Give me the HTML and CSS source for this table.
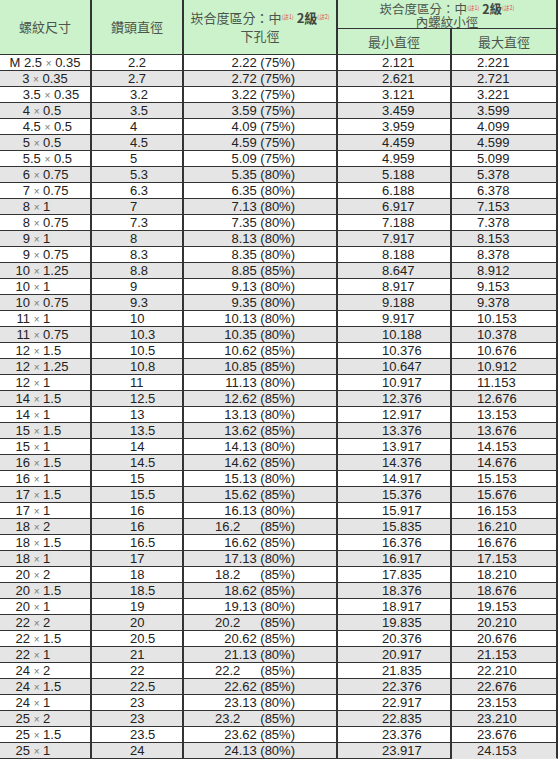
FILE: index.html
```html
<!DOCTYPE html>
<html lang="zh-Hant">
<head>
<meta charset="utf-8">
<title>螺紋尺寸表</title>
<link rel="stylesheet" href="styles.css">
</head>
<body>
<div class="sheet">
  <div class="head">
    <div class="hc hspan">螺紋尺寸</div>
    <div class="hc hspan">鑽頭直徑</div>
    <div class="hc hspan hcol3">
      <div>崁合度區分：中<sup>(註1)</sup> <b>2級</b><sup>(註2)</sup></div>
      <div>下孔徑</div>
    </div>
    <div class="hc hgroup">
      <div>崁合度區分：中<sup>(註1)</sup> <b>2級</b><sup>(註2)</sup></div>
      <div>內螺紋小徑</div>
    </div>
    <div class="hc">最小直徑</div>
    <div class="hc">最大直徑</div>
  </div>
  <div class="body">
    <div class="row"><div class="c c1 ctr">M 2.5 <span class="x">×</span> 0.35</div><div class="c c2 ctr">2.2</div><div class="c c3">2.22 (75%)</div><div class="c c4">2.121</div><div class="c c5">2.221</div></div>
    <div class="row"><div class="c c1 ctr">3 <span class="x">×</span> 0.35</div><div class="c c2 ctr">2.7</div><div class="c c3">2.72 (75%)</div><div class="c c4">2.621</div><div class="c c5">2.721</div></div>
    <div class="row"><div class="c c1"><span class="ip">3</span>.5 <span class="x">×</span> 0.35</div><div class="c c2">3.2</div><div class="c c3">3.22 (75%)</div><div class="c c4">3.121</div><div class="c c5">3.221</div></div>
    <div class="row"><div class="c c1"><span class="ip">4</span> <span class="x">×</span> 0.5</div><div class="c c2">3.5</div><div class="c c3">3.59 (75%)</div><div class="c c4">3.459</div><div class="c c5">3.599</div></div>
    <div class="row"><div class="c c1"><span class="ip">4</span>.5 <span class="x">×</span> 0.5</div><div class="c c2">4</div><div class="c c3">4.09 (75%)</div><div class="c c4">3.959</div><div class="c c5">4.099</div></div>
    <div class="row"><div class="c c1"><span class="ip">5</span> <span class="x">×</span> 0.5</div><div class="c c2">4.5</div><div class="c c3">4.59 (75%)</div><div class="c c4">4.459</div><div class="c c5">4.599</div></div>
    <div class="row"><div class="c c1"><span class="ip">5</span>.5 <span class="x">×</span> 0.5</div><div class="c c2">5</div><div class="c c3">5.09 (75%)</div><div class="c c4">4.959</div><div class="c c5">5.099</div></div>
    <div class="row"><div class="c c1"><span class="ip">6</span> <span class="x">×</span> 0.75</div><div class="c c2">5.3</div><div class="c c3">5.35 (80%)</div><div class="c c4">5.188</div><div class="c c5">5.378</div></div>
    <div class="row"><div class="c c1"><span class="ip">7</span> <span class="x">×</span> 0.75</div><div class="c c2">6.3</div><div class="c c3">6.35 (80%)</div><div class="c c4">6.188</div><div class="c c5">6.378</div></div>
    <div class="row"><div class="c c1"><span class="ip">8</span> <span class="x">×</span> 1</div><div class="c c2">7</div><div class="c c3">7.13 (80%)</div><div class="c c4">6.917</div><div class="c c5">7.153</div></div>
    <div class="row"><div class="c c1"><span class="ip">8</span> <span class="x">×</span> 0.75</div><div class="c c2">7.3</div><div class="c c3">7.35 (80%)</div><div class="c c4">7.188</div><div class="c c5">7.378</div></div>
    <div class="row"><div class="c c1"><span class="ip">9</span> <span class="x">×</span> 1</div><div class="c c2">8</div><div class="c c3">8.13 (80%)</div><div class="c c4">7.917</div><div class="c c5">8.153</div></div>
    <div class="row"><div class="c c1"><span class="ip">9</span> <span class="x">×</span> 0.75</div><div class="c c2">8.3</div><div class="c c3">8.35 (80%)</div><div class="c c4">8.188</div><div class="c c5">8.378</div></div>
    <div class="row"><div class="c c1"><span class="ip">10</span> <span class="x">×</span> 1.25</div><div class="c c2">8.8</div><div class="c c3">8.85 (85%)</div><div class="c c4">8.647</div><div class="c c5">8.912</div></div>
    <div class="row"><div class="c c1"><span class="ip">10</span> <span class="x">×</span> 1</div><div class="c c2">9</div><div class="c c3">9.13 (80%)</div><div class="c c4">8.917</div><div class="c c5">9.153</div></div>
    <div class="row"><div class="c c1"><span class="ip">10</span> <span class="x">×</span> 0.75</div><div class="c c2">9.3</div><div class="c c3">9.35 (80%)</div><div class="c c4">9.188</div><div class="c c5">9.378</div></div>
    <div class="row"><div class="c c1"><span class="ip">11</span> <span class="x">×</span> 1</div><div class="c c2">10</div><div class="c c3">10.13 (80%)</div><div class="c c4">9.917</div><div class="c c5">10.153</div></div>
    <div class="row"><div class="c c1"><span class="ip">11</span> <span class="x">×</span> 0.75</div><div class="c c2">10.3</div><div class="c c3">10.35 (80%)</div><div class="c c4">10.188</div><div class="c c5">10.378</div></div>
    <div class="row"><div class="c c1"><span class="ip">12</span> <span class="x">×</span> 1.5</div><div class="c c2">10.5</div><div class="c c3">10.62 (85%)</div><div class="c c4">10.376</div><div class="c c5">10.676</div></div>
    <div class="row"><div class="c c1"><span class="ip">12</span> <span class="x">×</span> 1.25</div><div class="c c2">10.8</div><div class="c c3">10.85 (85%)</div><div class="c c4">10.647</div><div class="c c5">10.912</div></div>
    <div class="row"><div class="c c1"><span class="ip">12</span> <span class="x">×</span> 1</div><div class="c c2">11</div><div class="c c3">11.13 (80%)</div><div class="c c4">10.917</div><div class="c c5">11.153</div></div>
    <div class="row"><div class="c c1"><span class="ip">14</span> <span class="x">×</span> 1.5</div><div class="c c2">12.5</div><div class="c c3">12.62 (85%)</div><div class="c c4">12.376</div><div class="c c5">12.676</div></div>
    <div class="row"><div class="c c1"><span class="ip">14</span> <span class="x">×</span> 1</div><div class="c c2">13</div><div class="c c3">13.13 (80%)</div><div class="c c4">12.917</div><div class="c c5">13.153</div></div>
    <div class="row"><div class="c c1"><span class="ip">15</span> <span class="x">×</span> 1.5</div><div class="c c2">13.5</div><div class="c c3">13.62 (85%)</div><div class="c c4">13.376</div><div class="c c5">13.676</div></div>
    <div class="row"><div class="c c1"><span class="ip">15</span> <span class="x">×</span> 1</div><div class="c c2">14</div><div class="c c3">14.13 (80%)</div><div class="c c4">13.917</div><div class="c c5">14.153</div></div>
    <div class="row"><div class="c c1"><span class="ip">16</span> <span class="x">×</span> 1.5</div><div class="c c2">14.5</div><div class="c c3">14.62 (85%)</div><div class="c c4">14.376</div><div class="c c5">14.676</div></div>
    <div class="row"><div class="c c1"><span class="ip">16</span> <span class="x">×</span> 1</div><div class="c c2">15</div><div class="c c3">15.13 (80%)</div><div class="c c4">14.917</div><div class="c c5">15.153</div></div>
    <div class="row"><div class="c c1"><span class="ip">17</span> <span class="x">×</span> 1.5</div><div class="c c2">15.5</div><div class="c c3">15.62 (85%)</div><div class="c c4">15.376</div><div class="c c5">15.676</div></div>
    <div class="row"><div class="c c1"><span class="ip">17</span> <span class="x">×</span> 1</div><div class="c c2">16</div><div class="c c3">16.13 (80%)</div><div class="c c4">15.917</div><div class="c c5">16.153</div></div>
    <div class="row"><div class="c c1"><span class="ip">18</span> <span class="x">×</span> 2</div><div class="c c2">16</div><div class="c c3">16.2<span class="gap"></span>(85%)</div><div class="c c4">15.835</div><div class="c c5">16.210</div></div>
    <div class="row"><div class="c c1"><span class="ip">18</span> <span class="x">×</span> 1.5</div><div class="c c2">16.5</div><div class="c c3">16.62 (85%)</div><div class="c c4">16.376</div><div class="c c5">16.676</div></div>
    <div class="row"><div class="c c1"><span class="ip">18</span> <span class="x">×</span> 1</div><div class="c c2">17</div><div class="c c3">17.13 (80%)</div><div class="c c4">16.917</div><div class="c c5">17.153</div></div>
    <div class="row"><div class="c c1"><span class="ip">20</span> <span class="x">×</span> 2</div><div class="c c2">18</div><div class="c c3">18.2<span class="gap"></span>(85%)</div><div class="c c4">17.835</div><div class="c c5">18.210</div></div>
    <div class="row"><div class="c c1"><span class="ip">20</span> <span class="x">×</span> 1.5</div><div class="c c2">18.5</div><div class="c c3">18.62 (85%)</div><div class="c c4">18.376</div><div class="c c5">18.676</div></div>
    <div class="row"><div class="c c1"><span class="ip">20</span> <span class="x">×</span> 1</div><div class="c c2">19</div><div class="c c3">19.13 (80%)</div><div class="c c4">18.917</div><div class="c c5">19.153</div></div>
    <div class="row"><div class="c c1"><span class="ip">22</span> <span class="x">×</span> 2</div><div class="c c2">20</div><div class="c c3">20.2<span class="gap"></span>(85%)</div><div class="c c4">19.835</div><div class="c c5">20.210</div></div>
    <div class="row"><div class="c c1"><span class="ip">22</span> <span class="x">×</span> 1.5</div><div class="c c2">20.5</div><div class="c c3">20.62 (85%)</div><div class="c c4">20.376</div><div class="c c5">20.676</div></div>
    <div class="row"><div class="c c1"><span class="ip">22</span> <span class="x">×</span> 1</div><div class="c c2">21</div><div class="c c3">21.13 (80%)</div><div class="c c4">20.917</div><div class="c c5">21.153</div></div>
    <div class="row"><div class="c c1"><span class="ip">24</span> <span class="x">×</span> 2</div><div class="c c2">22</div><div class="c c3">22.2<span class="gap"></span>(85%)</div><div class="c c4">21.835</div><div class="c c5">22.210</div></div>
    <div class="row"><div class="c c1"><span class="ip">24</span> <span class="x">×</span> 1.5</div><div class="c c2">22.5</div><div class="c c3">22.62 (85%)</div><div class="c c4">22.376</div><div class="c c5">22.676</div></div>
    <div class="row"><div class="c c1"><span class="ip">24</span> <span class="x">×</span> 1</div><div class="c c2">23</div><div class="c c3">23.13 (80%)</div><div class="c c4">22.917</div><div class="c c5">23.153</div></div>
    <div class="row"><div class="c c1"><span class="ip">25</span> <span class="x">×</span> 2</div><div class="c c2">23</div><div class="c c3">23.2<span class="gap"></span>(85%)</div><div class="c c4">22.835</div><div class="c c5">23.210</div></div>
    <div class="row"><div class="c c1"><span class="ip">25</span> <span class="x">×</span> 1.5</div><div class="c c2">23.5</div><div class="c c3">23.62 (85%)</div><div class="c c4">23.376</div><div class="c c5">23.676</div></div>
    <div class="row last"><div class="c c1"><span class="ip">25</span> <span class="x">×</span> 1</div><div class="c c2">24</div><div class="c c3">24.13 (80%)</div><div class="c c4">23.917</div><div class="c c5">24.153</div></div>
  </div>
</div>
</body>
</html>
```

FILE: styles.css
```css
html, body {
  margin: 0;
  padding: 0;
  background: #ffffff;
}

body {
  font-family: "Liberation Sans", Arial, sans-serif;
  font-size: 13px;
  color: #222222;
}

.sheet {
  width: 558px;
}

.head {
  display: grid;
  grid-template-columns: 92px 92px 154px 114px 106px;
  grid-template-rows: 29px 26px;
  background: #ccf2cc;
  font-family: "Noto Sans CJK TC", "Noto Sans CJK SC", sans-serif;
  font-size: 13px;
  color: #4b554b;
}

.hc {
  box-sizing: border-box;
  border-right: 2px solid #333333;
  border-bottom: 1px solid #333333;
  display: flex;
  align-items: center;
  justify-content: center;
  text-align: center;
  white-space: nowrap;
  line-height: 16px;
}

.hspan {
  grid-row: 1 / 3;
}

.hcol3 {
  flex-direction: column;
  line-height: 18px;
}

.hgroup {
  grid-column: 4 / 6;
  flex-direction: column;
  justify-content: flex-start;
  padding-top: 2px;
  font-size: 12.5px;
  line-height: 13px;
}

.hc b {
  font-weight: bold;
  color: #3f473f;
}

.hc sup {
  font-size: 5.5px;
  line-height: 0;
  vertical-align: 4px;
  color: #e04848;
  font-weight: normal;
}

.row {
  display: grid;
  grid-template-columns: 92px 92px 154px 114px 106px;
  height: 16px;
  background: #ffffff;
}

.body .row:nth-child(even) {
  background: #e5e5e5;
}

.c {
  box-sizing: border-box;
  border-right: 2px solid #333333;
  border-bottom: 1px solid #333333;
  line-height: 15px;
  white-space: nowrap;
  overflow: hidden;
}

.c1 {
  padding-left: 0;
}

.ip {
  display: inline-block;
  width: 30px;
  text-align: right;
}

.x {
  font-size: 10px;
  color: #7a7a7a;
}

.c2 {
  padding-left: 38px;
}

.c3 {
  text-align: right;
  padding-right: 41px;
}

.gap {
  display: inline-block;
  width: 20px;
}

.c4 {
  padding-left: 44px;
}

.c5 {
  padding-left: 25px;
}

.ctr {
  text-align: center;
  padding-left: 0;
}

.last .c5 {
  border-bottom-color: transparent;
}
```
